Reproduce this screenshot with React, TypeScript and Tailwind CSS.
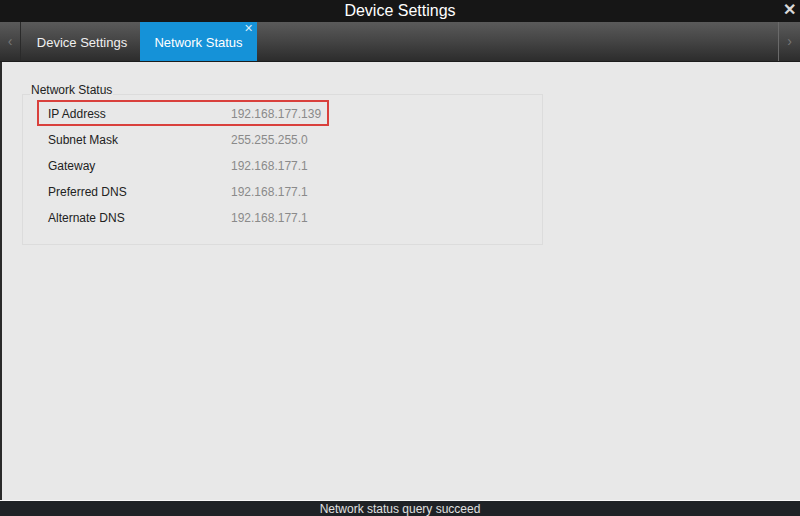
const rows = [
  { label: "IP Address", value: "192.168.177.139", marked: true },
  { label: "Subnet Mask", value: "255.255.255.0" },
  { label: "Gateway", value: "192.168.177.1" },
  { label: "Preferred DNS", value: "192.168.177.1" },
  { label: "Alternate DNS", value: "192.168.177.1" },
];

const App = () => {
  return (
    <div className="w-[800px] h-[516px] flex flex-col bg-[#e8e8e8] font-['Liberation_Sans',Arial,sans-serif] overflow-hidden">
      {/* Title bar */}
      <div className="h-[22px] bg-[#161616] flex items-center justify-center relative shrink-0">
        <span className="text-[16px] text-white leading-none">Device Settings</span>
        <span className="absolute right-[4px] top-[2px] text-[#d8d8d8] text-[16px] leading-none font-bold">✕</span>
      </div>

      {/* Tab bar */}
      <div className="h-[40px] shrink-0 flex bg-gradient-to-b from-[#5a5a5a] via-[#444] to-[#2c2c2c] border-b border-[#1c1c1c]">
        <div className="w-[21px] flex items-center justify-center border-r border-[#2a2a2a] text-[#777] text-[14px]">
          ‹
        </div>
        <div className="w-[119px] flex items-center justify-center text-[#f0f0f0] text-[13px] pt-[2px] pl-[3px]">
          Device Settings
        </div>
        <div className="w-[117px] relative flex items-center justify-center bg-[#1592d8] text-white text-[13px] pt-[2px]">
          Network Status
          <span className="absolute right-[4px] top-[1px] text-[11px] leading-none text-[#d6ecfa]">✕</span>
        </div>
        <div className="flex-1" />
        <div className="w-[22px] flex items-center justify-center border-l border-[#6a6a6a] text-[#777] text-[14px]">
          ›
        </div>
      </div>

      {/* Content */}
      <div className="flex-1 border-l-2 border-[#2a2a2a] pt-[20px] pl-[20px]">
        <div className="relative w-[521px] h-[151px] border border-[#dcdcdc] mt-[12px] pt-[5px]">
          <span className="absolute -top-[14px] left-[7px] px-[1px] bg-[#e8e8e8] text-[12px] text-[#222]">
            Network Status
          </span>
          <div className="flex flex-col">
            {rows.map(row => (
              <div
                key={row.label}
                className={`h-[26px] flex items-center ml-[14px] w-[292px] pt-[2px] ${row.marked ? "border-2 border-[#d9403c]" : "border-2 border-transparent"}`}
              >
                <span className="w-[192px] pl-[9px] text-[12px] text-[#222]">{row.label}</span>
                <span className="text-[12px] text-[#8a8a8a]">{row.value}</span>
              </div>
            ))}
          </div>
        </div>
      </div>

      {/* Status bar */}
      <div className="h-[16px] shrink-0 bg-[#1f2226] border-t border-[#f8f8f8] flex items-center justify-center">
        <span className="text-[12px] text-[#e0e0e0] leading-none">Network status query succeed</span>
      </div>
    </div>
  );
};

export default App;
